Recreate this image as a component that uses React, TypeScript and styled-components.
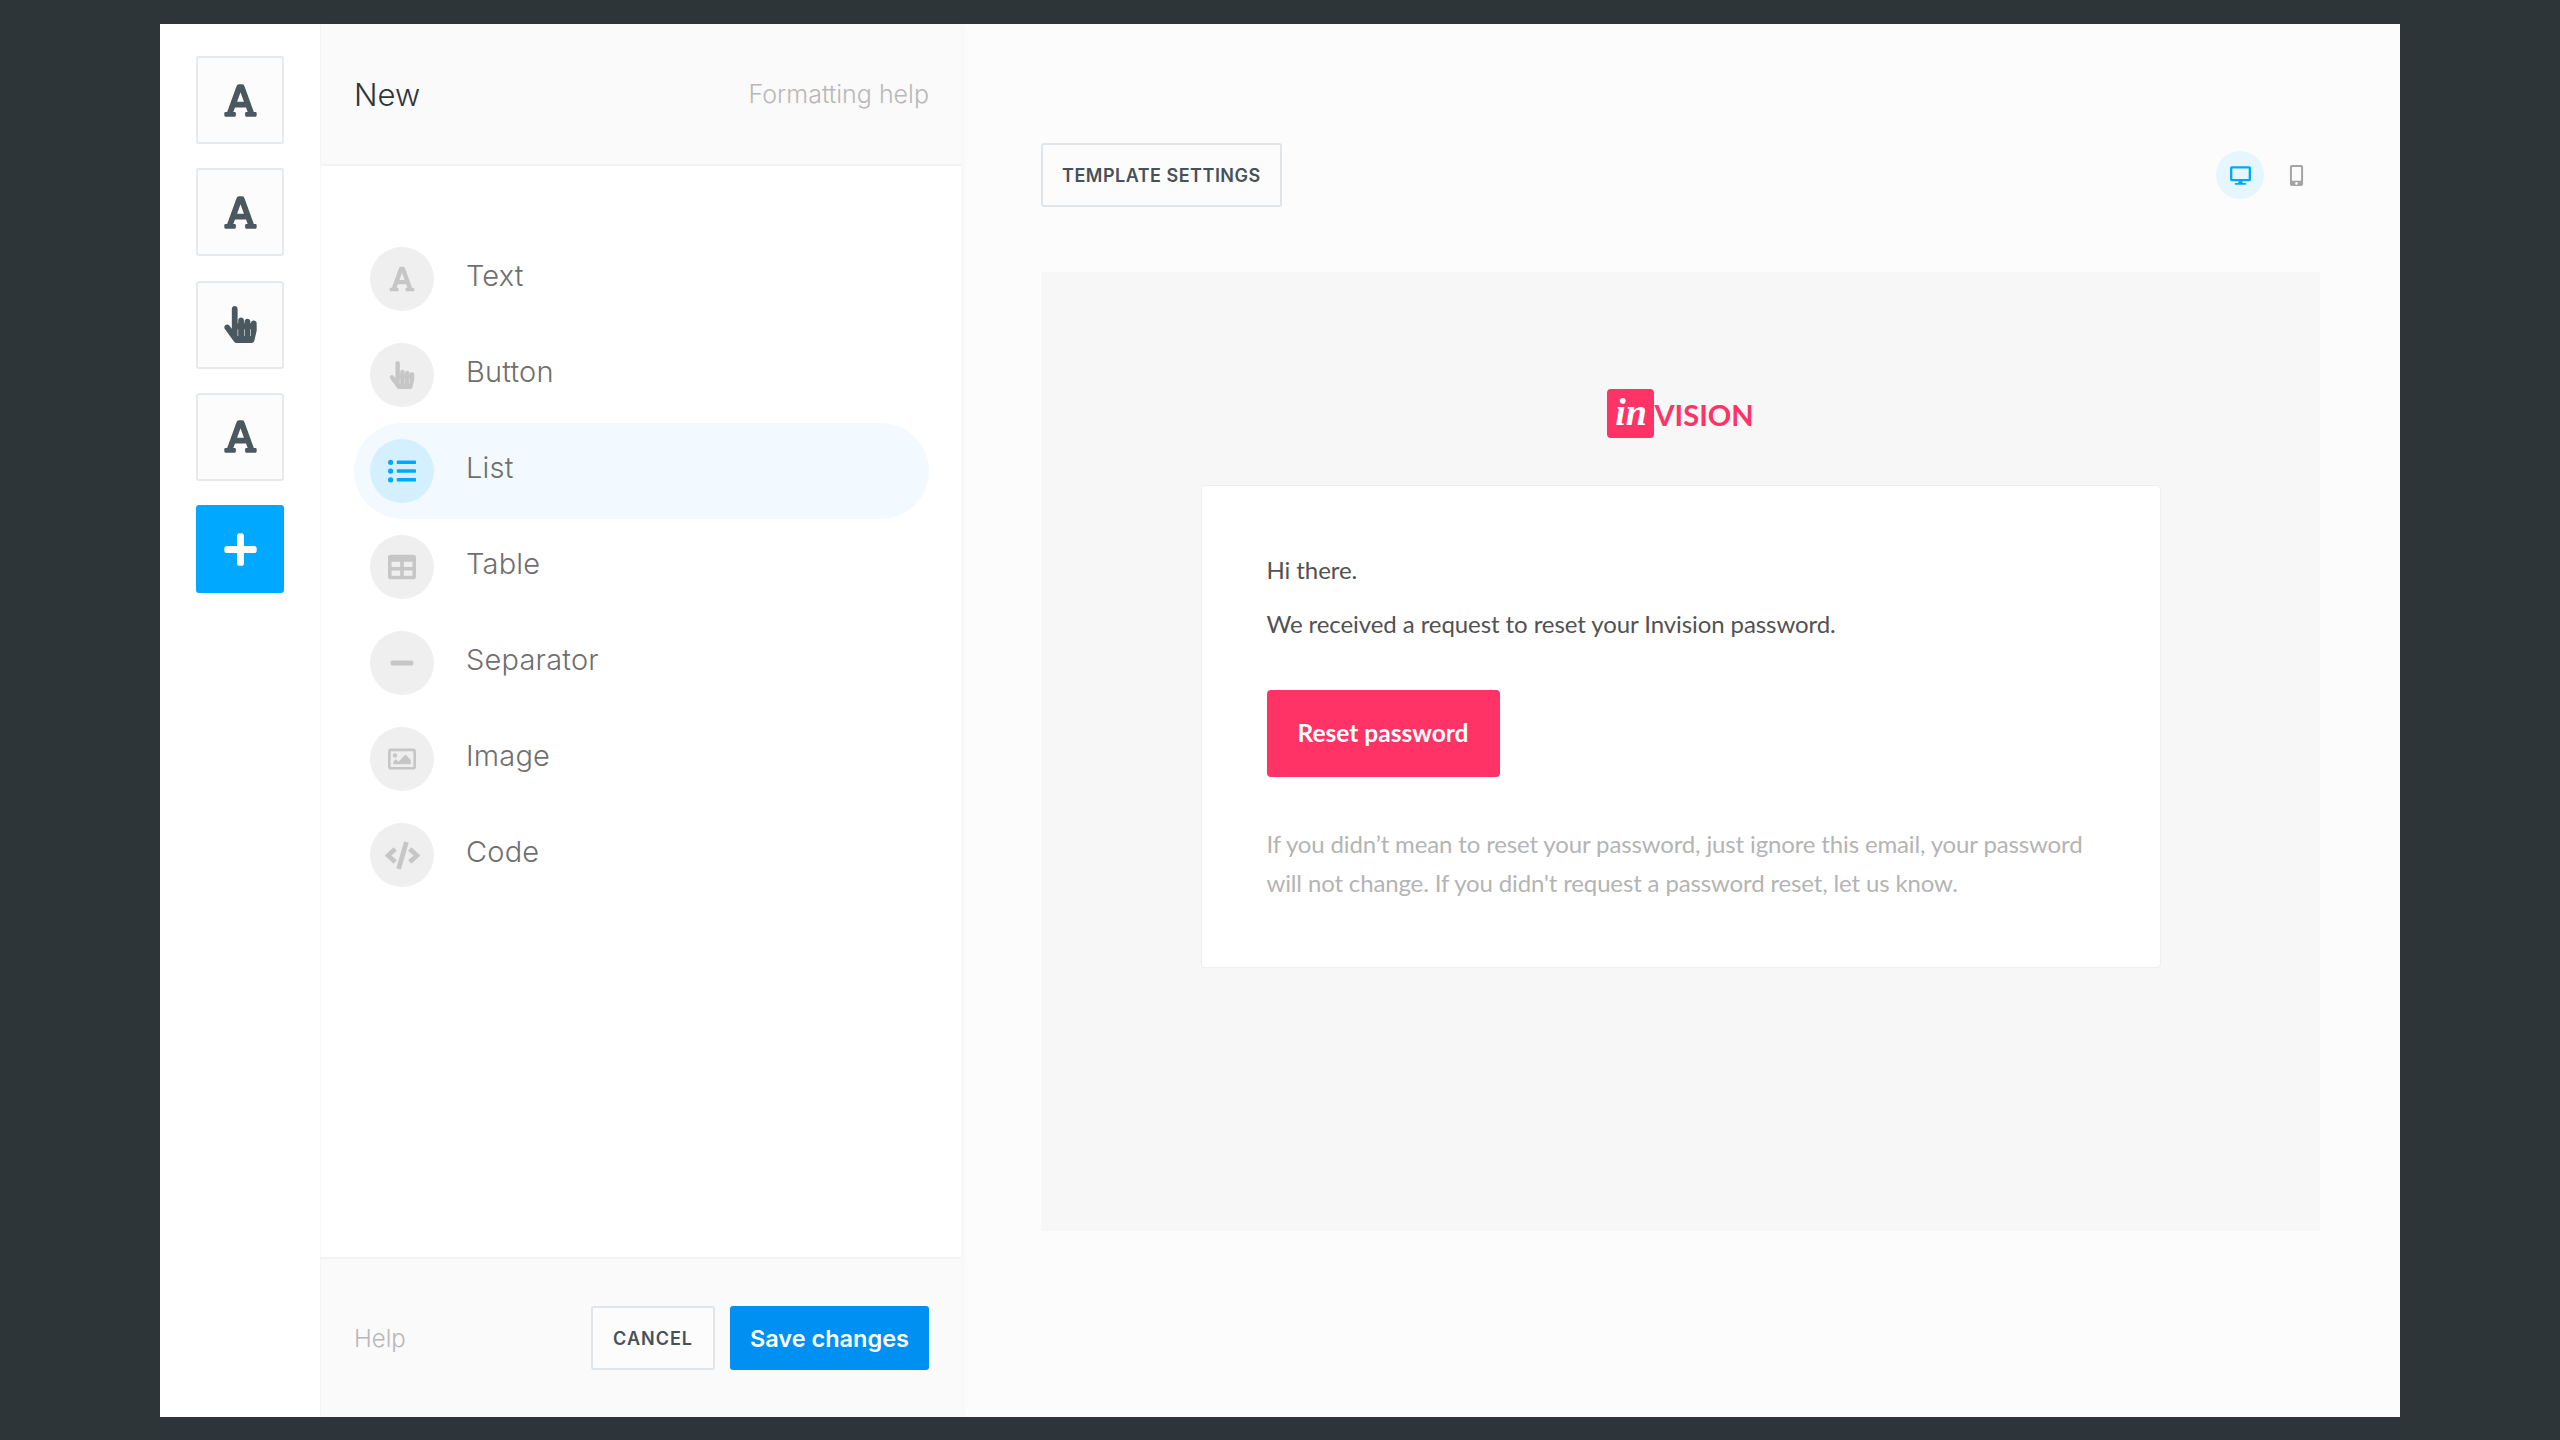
import React from "react";
import styled, { createGlobalStyle } from "styled-components";
import {
  FaCode,
  FaDesktop,
  FaFont,
  FaHandPointer,
  FaListUl,
  FaMinus,
  FaMobileAlt,
  FaPlus,
  FaRegImage,
  FaTable,
} from "react-icons/fa";

const GlobalStyle = createGlobalStyle`
  html, body {
    margin: 0;
    padding: 0;
    background: #2e3538;
  }
  * {
    box-sizing: border-box;
  }
`;

const UI_FONT = `Inter, "Liberation Sans", sans-serif`;
const MAIL_FONT = `Lato, "Liberation Sans", sans-serif`;

const Page = styled.div`
  width: 2560px;
  height: 1440px;
  padding: 24px 160px 23px;
`;

const Frame = styled.div`
  display: flex;
  height: 100%;
  background: #fff;
  font-family: ${UI_FONT};
`;

const Rail = styled.div`
  width: 161px;
  flex: none;
  display: flex;
  flex-direction: column;
  gap: 24.25px;
  padding: 32px 0 0 36px;
  border-right: 1px solid #f4f5f6;
`;

const RailButton = styled.button<{ $primary?: boolean }>`
  width: 88px;
  height: 88px;
  padding: 0;
  display: flex;
  align-items: center;
  justify-content: center;
  border-radius: 3px;
  border: ${(p) => (p.$primary ? "none" : "2px solid #e6eaed")};
  background: ${(p) => (p.$primary ? "#00a9ff" : "#fcfcfc")};
  color: ${(p) => (p.$primary ? "#fff" : "#4a5860")};
  font-size: 37px;
`;

const Panel = styled.div`
  width: 640px;
  flex: none;
  display: flex;
  flex-direction: column;
  position: relative;
  box-shadow: 3px 0 6px rgba(0, 0, 0, 0.025);
`;

const PanelHeader = styled.div`
  height: 142px;
  flex: none;
  display: flex;
  align-items: center;
  justify-content: space-between;
  padding: 0 32px 0 33px;
  background: #fafafa;
  border-bottom: 2px solid #f1f2f3;
`;

const PanelTitle = styled.div`
  font-size: 31px;
  font-weight: 350;
  color: #2e3538;
`;

const HelpLink = styled.span`
  font-size: 25px;
  font-weight: 300;
  color: #b8b8b8;
`;

const BlockList = styled.div`
  flex: 1;
  display: flex;
  flex-direction: column;
  padding: 65px 32px 0 33px;
`;

const BlockRow = styled.div<{ $active?: boolean }>`
  height: 96px;
  flex: none;
  display: flex;
  align-items: center;
  gap: 32px;
  padding-left: 16px;
  border-radius: 48px;
  background: ${(p) => (p.$active ? "#f3faff" : "transparent")};
`;

const BlockIcon = styled.div<{ $active?: boolean }>`
  width: 64px;
  height: 64px;
  flex: none;
  display: flex;
  align-items: center;
  justify-content: center;
  border-radius: 50%;
  background: ${(p) => (p.$active ? "#d4f0ff" : "#efefef")};
  color: ${(p) => (p.$active ? "#00a9ff" : "#c6c6c6")};
  font-size: 28px;
`;

const BlockLabel = styled.span`
  font-size: 29px;
  font-weight: 300;
  letter-spacing: 0.2px;
  color: #6f6f6f;
  margin-top: -7px;
`;

const PanelFooter = styled.div`
  height: 160px;
  flex: none;
  display: flex;
  align-items: center;
  padding: 0 32px 0 33px;
  background: #fafafa;
  border-top: 2px solid #f1f2f3;
`;

const FooterHelp = styled(HelpLink)`
  font-size: 24px;
  margin-right: auto;
`;

const OutlineButton = styled.button`
  height: 64px;
  padding: 0 19px;
  background: #fcfcfc;
  border: 2px solid #e0e5ea;
  border-radius: 3px;
  font-family: ${UI_FONT};
  font-size: 18px;
  font-weight: 600;
  letter-spacing: 0.5px;
  color: #465159;
`;

const CancelButton = styled(OutlineButton)`
  padding: 0 20px;
  letter-spacing: 1px;
`;

const SaveButton = styled.button`
  height: 64px;
  width: 199px;
  margin-left: 15px;
  padding: 0;
  background: #0090f2;
  border: none;
  border-radius: 3px;
  font-family: ${UI_FONT};
  font-size: 23.5px;
  font-weight: 600;
  color: #fff;
`;

const Main = styled.div`
  flex: 1;
  padding: 119px 80px 0;
  background: #fcfcfc;
`;

const Toolbar = styled.div`
  height: 64px;
  display: flex;
  align-items: center;
  justify-content: space-between;
  margin-bottom: 65px;
`;

const DeviceSwitch = styled.div`
  display: flex;
  align-items: center;
  gap: 8px;
`;

const DeviceButton = styled.div<{ $active?: boolean }>`
  width: 48px;
  height: 48px;
  display: flex;
  align-items: center;
  justify-content: center;
  border-radius: 50%;
  background: ${(p) => (p.$active ? "#e5f6ff" : "transparent")};
  color: ${(p) => (p.$active ? "#00a9ff" : "#a4a4a4")};
  font-size: 21px;
`;

const Preview = styled.div`
  height: 959px;
  display: flex;
  flex-direction: column;
  align-items: center;
  padding-top: 117px;
  background: #f7f7f7;
`;

const Logo = styled.div`
  height: 49px;
  display: flex;
  align-items: center;
  margin-bottom: 47px;
  color: #ff3366;
`;

const LogoMark = styled.div`
  width: 47px;
  height: 49px;
  display: flex;
  align-items: center;
  justify-content: center;
  border-radius: 4px;
  background: #ff3366;
  color: #fff;
  font-family: "Liberation Serif", serif;
  font-size: 38px;
  font-style: italic;
  font-weight: 700;
  padding-bottom: 4px;
`;

const LogoWord = styled.span`
  font-family: ${MAIL_FONT};
  font-size: 29px;
  font-weight: 700;
  text-transform: uppercase;
  margin-top: 2px;
`;

const MailCard = styled.div`
  width: 960px;
  padding: 64px 64px 65px 65px;
  background: #fff;
  border: 1px solid #eeeeee;
  border-radius: 4px;
  font-family: ${MAIL_FONT};
  font-size: 24px;
  letter-spacing: -0.08px;
  line-height: 39px;
`;

const MailText = styled.p`
  margin: 0 0 15px;
  color: #525252;
`;

const ResetButton = styled.button`
  display: block;
  width: 233px;
  height: 87px;
  margin: 47px 0 47px;
  padding: 0 0 2px;
  background: #ff3366;
  border: none;
  border-radius: 4px;
  font-family: ${MAIL_FONT};
  font-size: 24.5px;
  font-weight: 700;
  color: #fff;
`;

const MailNote = styled.p`
  margin: 0;
  color: #b4b4b4;
  letter-spacing: -0.14px;
`;

const BLOCKS = [
  { label: "Text", icon: <FaFont /> },
  { label: "Button", icon: <FaHandPointer /> },
  { label: "List", icon: <FaListUl />, active: true },
  { label: "Table", icon: <FaTable /> },
  { label: "Separator", icon: <FaMinus size={26} /> },
  { label: "Image", icon: <FaRegImage /> },
  { label: "Code", icon: <FaCode size={35} /> },
];

export default function App() {
  return (
    <Page>
      <GlobalStyle />
      <Frame>
        <Rail>
          <RailButton><FaFont /></RailButton>
          <RailButton><FaFont /></RailButton>
          <RailButton><FaHandPointer /></RailButton>
          <RailButton><FaFont /></RailButton>
          <RailButton $primary><FaPlus /></RailButton>
        </Rail>

        <Panel>
          <PanelHeader>
            <PanelTitle>New</PanelTitle>
            <HelpLink>Formatting help</HelpLink>
          </PanelHeader>
          <BlockList>
            {BLOCKS.map((block) => (
              <BlockRow key={block.label} $active={block.active}>
                <BlockIcon $active={block.active}>{block.icon}</BlockIcon>
                <BlockLabel>{block.label}</BlockLabel>
              </BlockRow>
            ))}
          </BlockList>
          <PanelFooter>
            <FooterHelp>Help</FooterHelp>
            <CancelButton>CANCEL</CancelButton>
            <SaveButton>Save changes</SaveButton>
          </PanelFooter>
        </Panel>

        <Main>
          <Toolbar>
            <OutlineButton>TEMPLATE SETTINGS</OutlineButton>
            <DeviceSwitch>
              <DeviceButton $active><FaDesktop /></DeviceButton>
              <DeviceButton><FaMobileAlt /></DeviceButton>
            </DeviceSwitch>
          </Toolbar>
          <Preview>
            <Logo>
              <LogoMark>in</LogoMark>
              <LogoWord>vision</LogoWord>
            </Logo>
            <MailCard>
              <MailText>Hi there.</MailText>
              <MailText>We received a request to reset your Invision password.</MailText>
              <ResetButton>Reset password</ResetButton>
              <MailNote>
                If you didn’t mean to reset your password, just ignore this email, your password
                will not change. If you didn't request a password reset, let us know.
              </MailNote>
            </MailCard>
          </Preview>
        </Main>
      </Frame>
    </Page>
  );
}
